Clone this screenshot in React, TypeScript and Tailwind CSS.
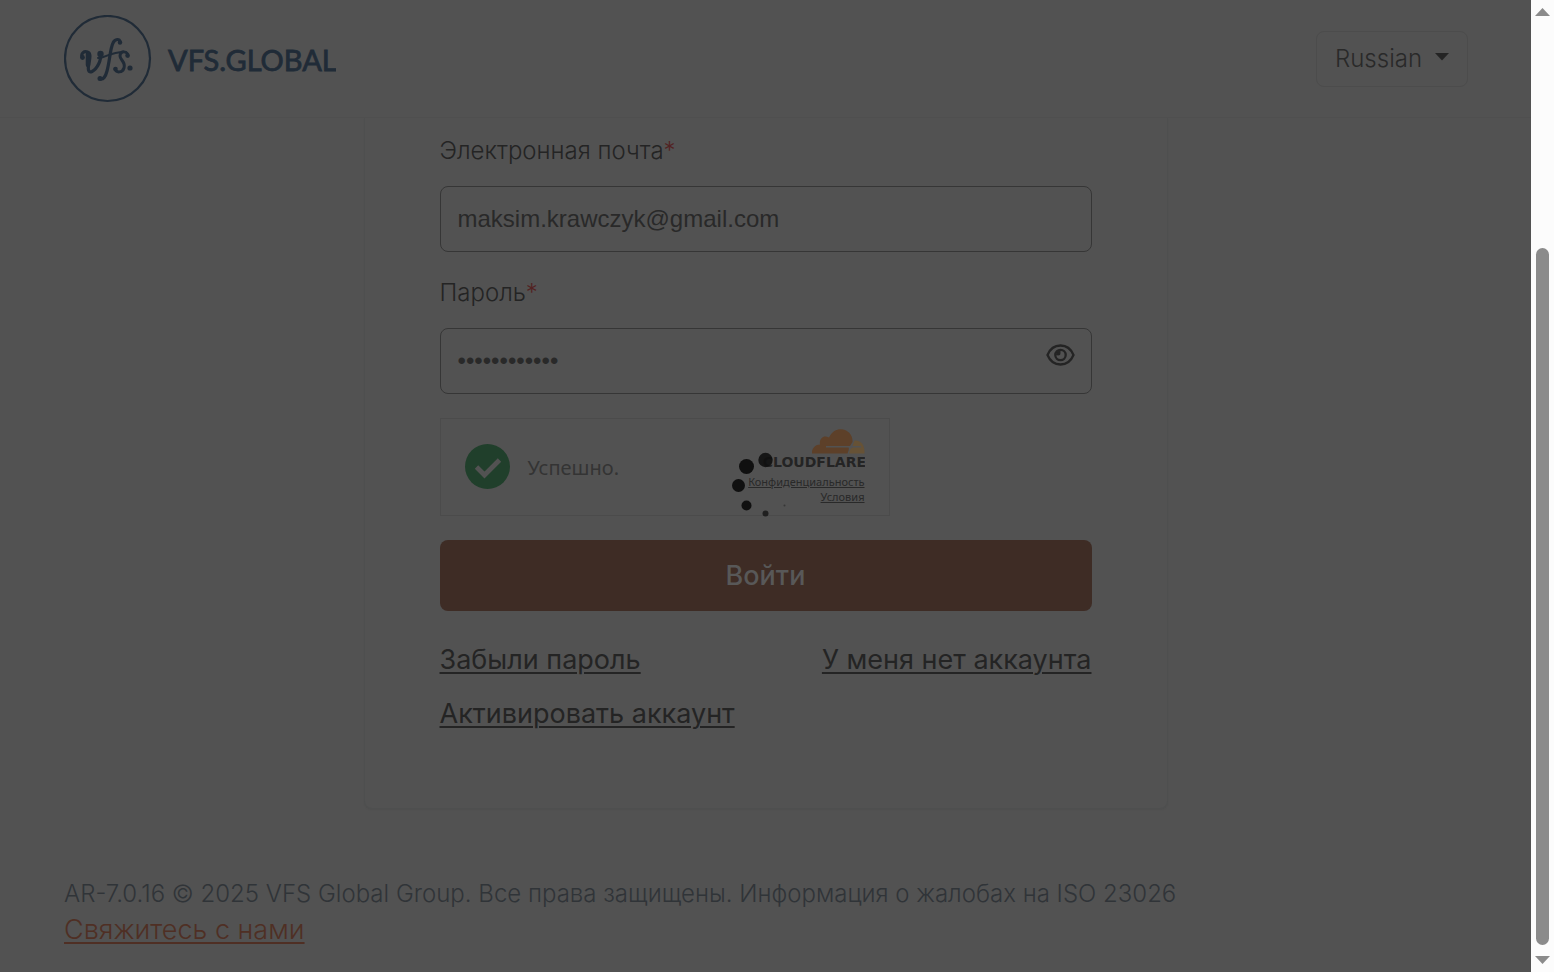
import { useState } from 'react';

const text = 'text-[#242424]';

function Logo() {
  return (
    <a href="#home" aria-label="VFS.GLOBAL" className="block shrink-0">
      <svg width="272" height="88" viewBox="0 0 272 88" fill="none" stroke="#202b37">
        <circle cx="43.500" cy="43.500" r="42.500" strokeWidth="2.200" />
        <g strokeLinecap="round" strokeLinejoin="round">
          <path d="M18 42C17 38 20 36 23.500 37C27 38 26 43 25 48C23.500 55 24.500 58 28 56.500C33 54 38 45 36 39" strokeWidth="3.200" />
          <path d="M24 39V50" strokeWidth="4.500" />
          <path d="M34 43C40 44 47 36 62 37" strokeWidth="2" />
          <path d="M56 27C56 23.500 51 23.500 49 28C46 34 46 45 43 56C41.500 62 39 65 36 63.500" strokeWidth="3.200" />
          <path d="M64 41C64 36 56 35 56 41C56 45 62 47 60 53C58.500 58 52 58 51 54" strokeWidth="3" />
        </g>
        <g fill="#202b37" stroke="none">
          <circle cx="18.500" cy="42.500" r="2.400" />
          <circle cx="36.500" cy="39" r="3.200" />
          <circle cx="56" cy="27.500" r="2.200" />
          <circle cx="36" cy="63.500" r="2.500" />
          <circle cx="63.500" cy="40.500" r="2.200" />
          <circle cx="51.500" cy="54" r="2.300" />
          <circle cx="66" cy="53" r="2.600" />
        </g>
        <text x="104" y="56" fill="#202b37" stroke="#202b37" strokeWidth="0.800" fontFamily="Lato, sans-serif" fontWeight="400" fontSize="29">
          VFS.GLOBAL
        </text>
      </svg>
    </a>
  );
}

function Cloud() {
  return (
    <svg width="53" height="25" viewBox="0 0 53 25" aria-hidden="true">
      <path fill="#5d4029" d="M0 24.500C-.5 20 3 15.500 8 15.500C7 9 12 5.500 17 8.500C20 2 25 0 29 .2C36 .5 41 6 40.500 13L38 17H14V18.500H36.500C37.500 20 36 23 35.500 24.500Z" />
      <path fill="#665236" d="M42.500 11.500C49 11 53 16 52.500 24.500H37C38 20 39 18.500 42 18.500H49V17H40.500Z" />
    </svg>
  );
}

function Spinner() {
  return (
    <svg className="absolute left-1/2 top-1/2 -translate-x-1/2 -translate-y-1/2" width="70" height="68" viewBox="0 0 70 68" fill="#101010" role="status" aria-label="Загрузка">
      <circle cx="34.500" cy="8" r="7.200" fillOpacity=".9" />
      <circle cx="15.500" cy="14.500" r="7.500" />
      <circle cx="7.500" cy="33.500" r="6.500" />
      <circle cx="15.500" cy="53.500" r="5" />
      <circle cx="34.500" cy="61.500" r="3" fillOpacity=".75" />
      <circle cx="53.500" cy="53.500" r="1" fillOpacity=".4" />
    </svg>
  );
}

export default function App() {
  const [email, setEmail] = useState('maksim.krawczyk@gmail.com');
  const [password, setPassword] = useState('abcdefghijkl');
  const [visible, setVisible] = useState(false);
  const field = 'block h-[66px] w-full rounded-lg border border-[#363636] bg-transparent pl-[17px] pr-16 font-["Liberation_Sans",Arial,sans-serif] text-2xl text-[#292929] outline-none';
  const link = 'underline decoration-2 underline-offset-3';

  return (
    <div className="flex min-h-screen bg-[#525252] font-[Inter,sans-serif]">
      <div className="flex min-w-0 flex-1 flex-col">
        <header className="flex h-[118px] items-center justify-between border-b border-[#4f4f4f] pl-16 pr-[63px]">
          <Logo />
          <button type="button" className="flex h-14 w-[152px] items-center justify-between rounded-lg border border-[#4c4c4c] px-[18px] text-2xl font-[350] text-[#292929]">
            Russian
            <svg width="14" height="8" viewBox="0 0 14 8" className="mb-1" aria-hidden="true"><path d="M0 0H14L7 7.500Z" fill="#242424" /></svg>
          </button>
        </header>

        <main className="flex flex-1 items-start justify-center">
          <form className="flex w-[804px] flex-col rounded-b-lg border-x border-b border-[#4e4f4f] px-[75px] pb-[74px] shadow-xs" onSubmit={(e) => e.preventDefault()}>
            <label htmlFor="email" className={'pt-[13px] text-2xl font-[350] leading-10 ' + text}>
              Электронная почта<span className="text-[#522222]">*</span>
            </label>
            <input id="email" type="email" value={email} onChange={(e) => setEmail(e.target.value)} className={'mt-[15px] ' + field} />
            <label htmlFor="password" className={'mt-[21px] text-2xl font-[350] leading-10 ' + text}>
              Пароль<span className="text-[#522222]">*</span>
            </label>
            <div className="relative mt-[15px]">
              <input id="password" type={visible ? 'text' : 'password'} value={password} onChange={(e) => setPassword(e.target.value)} className={field} />
              <button type="button" aria-label="Показать пароль" onClick={() => setVisible(!visible)} className="absolute right-[17px] top-4">
                <svg width="29" height="22" viewBox="0 0 29 22" fill="none" stroke="#242424" strokeWidth="2.300">
                  <path d="M1.500 11C4 5 9 1.500 14.500 1.500S25 5 27.500 11C25 17 20 20.500 14.500 20.500S4 17 1.500 11Z" />
                  <circle cx="14.500" cy="11" r="5.200" />
                  <path d="M10 11A4.500 4.500 0 0 1 14.500 6.500V9A2.500 2.500 0 0 1 12 11.500Z" fill="#242424" stroke="none" />
                </svg>
              </button>
            </div>

            <section className="mt-6 flex h-[98px] w-[450px] items-center justify-between self-start border border-[#4b4b4b] px-6 pb-0.5">
              <div className="flex items-center gap-[18px] font-['Noto_Sans',sans-serif] text-xl text-[#343434]">
                <svg width="45" height="45" viewBox="0 0 45 45" aria-hidden="true">
                  <circle cx="22.500" cy="22.500" r="22.500" fill="#203f2b" />
                  <path d="M11.500 23L19.500 31L34.500 16" fill="none" stroke="#525252" strokeWidth="4.800" />
                </svg>
                <span className="pt-1">Успешно.</span>
              </div>
              <div className="flex flex-col items-end font-['Noto_Sans',sans-serif] text-[11px] text-[#292929]">
                <Cloud />
                <svg width="112" height="20" viewBox="0 0 112 20" aria-label="CLOUDFLARE">
                  <text x="113" y="13" textAnchor="end" fill="#242424" fontFamily="DejaVu Sans, sans-serif" fontWeight="700" fontSize="14">CLOUDFLARE</text>
                </svg>
                <a href="#privacy" className="leading-[15px] underline">Конфиденциальность</a>
                <a href="#terms" className="leading-[15px] underline">Условия</a>
              </div>
            </section>

            <button type="submit" className="mt-6 h-[71px] rounded-lg bg-[#3e2c25] pt-0.5 text-[27px] font-medium text-[#585858]">Войти</button>
            <nav className={'mt-[29px] flex flex-wrap justify-between gap-y-3.5 text-[27px] leading-10 ' + text}>
              <a href="#forgot" className={link}>Забыли пароль</a>
              <a href="#register" className={link}>У меня нет аккаунта</a>
              <a href="#activate" className={link}>Активировать аккаунт</a>
            </nav>
          </form>
        </main>

        <footer className="px-16 pb-[23px] text-2xl font-[350] leading-9 text-[#303438]">
          <p>AR-7.0.16 © 2025 VFS Global Group. Все права защищены. Информация о жалобах на ISO 23026</p>
          <a href="#contact" className={'text-[27px] text-[#4f2f24] ' + link}>Свяжитесь с нами</a>
        </footer>
      </div>

      <div className="flex w-[23px] shrink-0 flex-col items-center bg-[#fcfcfc] py-2" aria-hidden="true">
        <svg width="15" height="8" viewBox="0 0 15 8"><path d="M0 8L7.500 0L15 8Z" fill="#8b8b8b" /></svg>
        <div className="mb-[11px] mt-[232px] w-[13px] flex-1 rounded-full bg-[#8b8b8b]" />
        <svg width="15" height="8" viewBox="0 0 15 8"><path d="M0 0H15L7.500 8Z" fill="#8b8b8b" /></svg>
      </div>
      <div className="pointer-events-none fixed inset-y-0 left-0 right-[23px]"><Spinner /></div>
    </div>
  );
}
